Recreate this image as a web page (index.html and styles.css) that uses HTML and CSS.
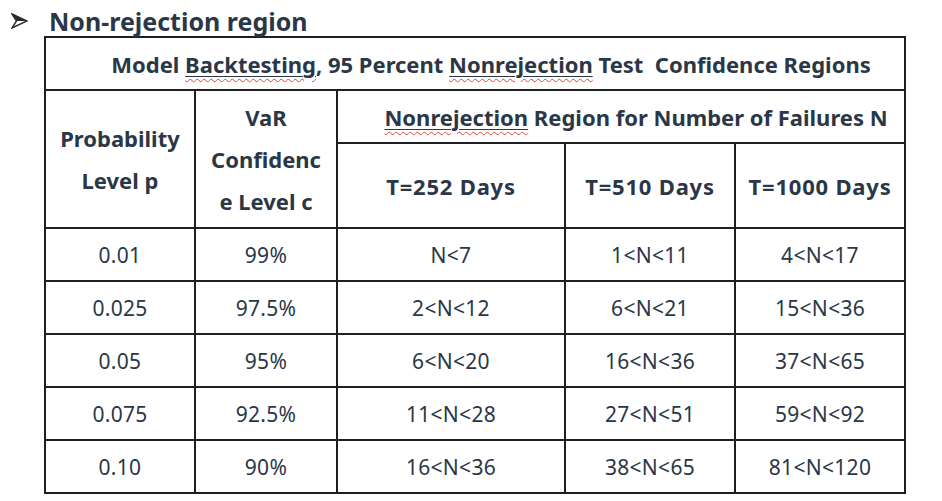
FILE: index.html
```html
<!DOCTYPE html>
<html>
<head>
<meta charset="utf-8">
<link rel="stylesheet" href="styles.css">
</head>
<body>
<div class="page">
  <h1 class="heading">
    <span class="bullet"><svg width="17" height="16" viewBox="0 0 17 16"><path d="M1 1 L16 8 L1 15 L5.5 8 Z" fill="#ffffff" stroke="#2a2a2a" stroke-width="1.4" stroke-linejoin="miter"/><path d="M1 1 L16 8 L5.5 8 Z" fill="#2a2a2a"/></svg></span>
    <span>Non-rejection region</span>
  </h1>
  <table class="grid">
    <colgroup>
      <col class="c1"><col class="c2"><col class="c3"><col class="c4"><col class="c5">
    </colgroup>
    <tr class="r-title">
      <th colspan="5" class="title">Model <span class="ul"><span class="sp">Backtesting</span></span>, 95 Percent <span class="ul"><span class="sp">Nonrejection</span></span> Test&nbsp; Confidence Regions</th>
    </tr>
    <tr class="r-sub">
      <th rowspan="2" class="hdr">Probability<br>Level p</th>
      <th rowspan="2" class="hdr">VaR<br>Confidenc<br>e Level c</th>
      <th colspan="3" class="region"><span class="ul"><span class="sp">Nonrejection</span></span> Region for Number of Failures N</th>
    </tr>
    <tr class="r-days">
      <th>T=252 Days</th>
      <th>T=510 Days</th>
      <th>T=1000 Days</th>
    </tr>
    <tr><td>0.01</td><td>99%</td><td>N&lt;7</td><td>1&lt;N&lt;11</td><td>4&lt;N&lt;17</td></tr>
    <tr><td>0.025</td><td>97.5%</td><td>2&lt;N&lt;12</td><td>6&lt;N&lt;21</td><td>15&lt;N&lt;36</td></tr>
    <tr><td>0.05</td><td>95%</td><td>6&lt;N&lt;20</td><td>16&lt;N&lt;36</td><td>37&lt;N&lt;65</td></tr>
    <tr><td>0.075</td><td>92.5%</td><td>11&lt;N&lt;28</td><td>27&lt;N&lt;51</td><td>59&lt;N&lt;92</td></tr>
    <tr><td>0.10</td><td>90%</td><td>16&lt;N&lt;36</td><td>38&lt;N&lt;65</td><td>81&lt;N&lt;120</td></tr>
  </table>
</div>
</body>
</html>
```
FILE: styles.css
```css
html, body {
  margin: 0;
  padding: 0;
  background: #ffffff;
}
.page {
  width: 942px;
  height: 501px;
  overflow: hidden;
  font-family: "Noto Sans", "Open Sans", sans-serif;
  color: #2b3747;
}
.heading {
  margin: 0;
  height: 36px;
  display: flex;
  align-items: center;
  font-size: 25px;
  font-weight: 700;
  line-height: 36px;
  padding: 6px 0 0 11px;
  box-sizing: border-box;
}
.bullet {
  width: 38px;
  display: flex;
  align-items: center;
}
.grid {
  margin-left: 44px;
  border-collapse: collapse;
  table-layout: fixed;
  width: 862px;
}
.c1 { width: 150px; }
.c2 { width: 142px; }
.c3 { width: 228px; }
.c4 { width: 170px; }
.c5 { width: 170px; }
.grid th, .grid td {
  border: 2px solid #1f1f1f;
  text-align: center;
  vertical-align: middle;
  padding: 0;
}
.grid th {
  font-size: 22px;
  font-weight: 700;
}
.grid td {
  font-size: 21px;
  font-weight: 400;
  height: 51px;
  letter-spacing: 0.3px;
}
.r-title th { height: 51px; }
.title { padding-left: 32px !important; }
.r-sub .region { height: 51px; padding-left: 30px; }
.r-days th { height: 83px; letter-spacing: 0.8px; }
.hdr { line-height: 42px; }
.ul {
  text-decoration: underline solid #2b3747;
  text-decoration-thickness: 1px;
  text-underline-offset: 3px;
}
.sp {
  text-decoration: underline wavy #d9453b;
  text-decoration-thickness: 1px;
  text-underline-offset: 5px;
}
```
